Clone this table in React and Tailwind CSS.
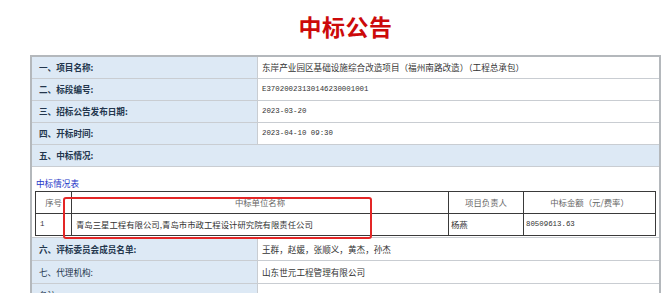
import React from 'react';

const cjk = { fontFamily: '"Noto Sans CJK SC", "Noto Sans", sans-serif' };
const mono = { fontFamily: '"Liberation Mono", "DejaVu Sans Mono", monospace' };

const InfoRow = ({ label, value, bold = true, num = false, h = 'h-[22px]' }) => (
  <div className={`flex ${h} border-b border-[#c9cdd2]`}>
    <div
      className={`w-[226px] shrink-0 bg-[#dde9f5] border-r border-[#c9cdd2] pl-[7px] flex items-center text-[8.6px] text-[#23364d] ${bold ? 'font-bold' : ''}`}
    >
      {label}
    </div>
    <div
      className={`flex-1 pl-[4px] flex items-center text-[#333] ${num ? 'text-[7.4px]' : 'text-[8.6px]'}`}
      style={num ? mono : cjk}
    >
      {value}
    </div>
  </div>
);

const App = () => {
  return (
    <div className="w-[669px] h-[293px] overflow-hidden bg-white" style={cjk}>
      <div className="ml-[30px] w-[631px]">
        <div className="h-[55px] flex items-center justify-center pb-[2px]">
          <h1 className="text-[23px] font-bold text-[#cc0a0a] tracking-[0.5px]">中标公告</h1>
        </div>

        <div className="relative border-x-2 border-t-2 border-[#b4b8bc]">
          <InfoRow label="一、项目名称:" value="东岸产业园区基础设施综合改造项目（福州南路改造）（工程总承包）" />
          <InfoRow label="二、标段编号:" value="E37020023130146230001001" num />
          <InfoRow label="三、招标公告发布日期:" value="2023-03-20" num />
          <InfoRow label="四、开标时间:" value="2023-04-10 09:30" num />
          <div className="h-[22px] bg-[#dde9f5] border-b border-[#c9cdd2] pl-[7px] flex items-center text-[8.6px] font-bold text-[#23364d]">
            五、中标情况:
          </div>

          <div className="h-[71px] px-[3px] border-b border-[#c9cdd2] flex flex-col">
            <div className="h-[24px] flex items-end pb-[1px] pl-[1px] text-[8.6px] text-[#2536c8]">中标情况表</div>
            <div className="border border-[#3a3a3a] text-[8.4px]">
              <div className="flex h-[22px] border-b border-[#3a3a3a] text-[#666]">
                <div className="w-[36px] border-r border-[#3a3a3a] flex items-center justify-center">序号</div>
                <div className="w-[377px] border-r border-[#3a3a3a] flex items-center justify-center">中标单位名称</div>
                <div className="w-[75px] border-r border-[#3a3a3a] flex items-center justify-center">项目负责人</div>
                <div className="flex-1 flex items-center justify-center">中标金额（元/费率）</div>
              </div>
              <div className="flex h-[21px] text-[#333]">
                <div className="w-[36px] border-r border-[#3a3a3a] flex items-center pl-[4px] text-[7.4px]" style={mono}>1</div>
                <div className="w-[377px] border-r border-[#3a3a3a] flex items-center pl-[4px]">
                  青岛三星工程有限公司,青岛市市政工程设计研究院有限责任公司
                </div>
                <div className="w-[75px] border-r border-[#3a3a3a] flex items-center pl-[2px]">杨燕</div>
                <div className="flex-1 flex items-center pl-[2px] text-[7.4px]" style={mono}>80509613.63</div>
              </div>
            </div>
          </div>

          <InfoRow label="六、评标委员会成员名单:" value="王群，赵媛，张顺义，黄杰，孙杰" h="h-[23px]" />
          <InfoRow label="七、代理机构:" value="山东世元工程管理有限公司" bold={false} h="h-[23px]" />
          <InfoRow label="备注" value="" bold={false} h="h-[23px]" />

          <div className="absolute left-[31px] top-[140px] w-[309px] h-[42px] border-2 border-[#e32626] rounded-[3px]" />
        </div>
      </div>
    </div>
  );
};

export default App;
